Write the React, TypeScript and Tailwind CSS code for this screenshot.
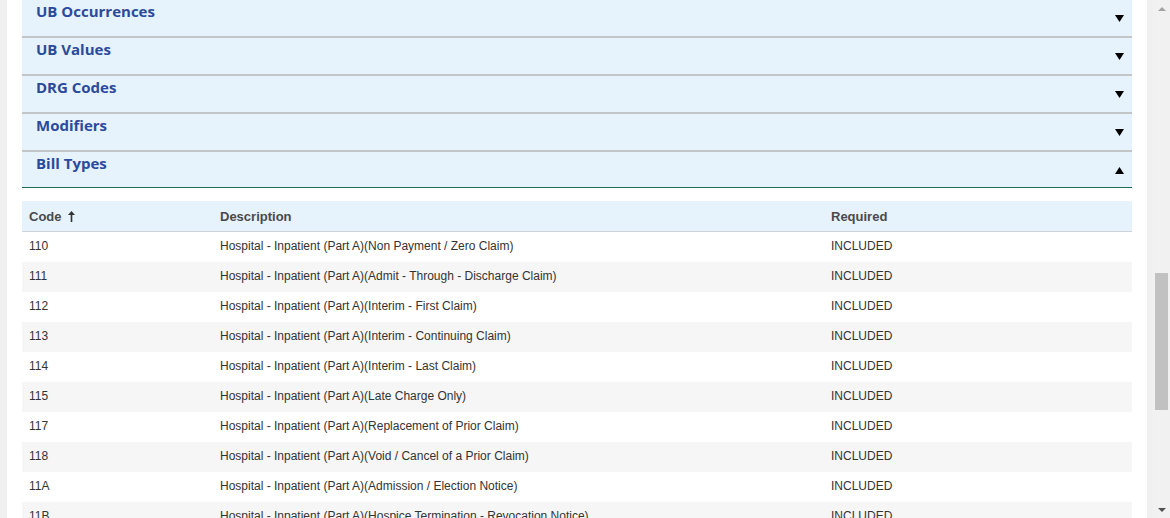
import React from 'react';

const sections = ['UB Occurrences', 'UB Values', 'DRG Codes', 'Modifiers'];

const rows: [string, string][] = [
  ['110', 'Hospital - Inpatient (Part A)(Non Payment / Zero Claim)'],
  ['111', 'Hospital - Inpatient (Part A)(Admit - Through - Discharge Claim)'],
  ['112', 'Hospital - Inpatient (Part A)(Interim - First Claim)'],
  ['113', 'Hospital - Inpatient (Part A)(Interim - Continuing Claim)'],
  ['114', 'Hospital - Inpatient (Part A)(Interim - Last Claim)'],
  ['115', 'Hospital - Inpatient (Part A)(Late Charge Only)'],
  ['117', 'Hospital - Inpatient (Part A)(Replacement of Prior Claim)'],
  ['118', 'Hospital - Inpatient (Part A)(Void / Cancel of a Prior Claim)'],
  ['11A', 'Hospital - Inpatient (Part A)(Admission / Election Notice)'],
  ['11B', 'Hospital - Inpatient (Part A)(Hospice Termination - Revocation Notice)'],
];

function Caret({ up }: { up?: boolean }) {
  return (
    <svg width="9" height="7" viewBox="0 0 9 7" className="mr-[8px]">
      {up ? <polygon points="0,7 9,7 4.5,0" fill="#000" /> : <polygon points="0,0 9,0 4.5,7" fill="#000" />}
    </svg>
  );
}

function Header({ title, open }: { title: string; open?: boolean }) {
  return (
    <div
      className={`flex items-start justify-between bg-[#e6f2fc] pl-[14px] ${
        open ? 'h-[36px] border-b border-[#1f6b5a]' : 'h-[38px] border-b-2 border-[#c3c6c9]'
      }`}
    >
      <span className="pt-[1px] text-[15px] leading-[20px] font-bold text-[#2b4a9b]" style={{ fontFamily: '"Open Sans", sans-serif' }}>
        {title}
      </span>
      <div className="flex h-[35px] items-center pt-[1px]">
        <Caret up={open} />
      </div>
    </div>
  );
}

export default function App() {
  return (
    <div className="flex h-[518px] w-[1170px] overflow-hidden bg-white" style={{ fontFamily: '"Liberation Sans", Arial, sans-serif' }}>
      <div className="w-[7px] bg-[#f0f0f0]" />
      <div className="flex-1 bg-white px-[15px]">
        {sections.map((s) => (
          <Header key={s} title={s} />
        ))}
        <Header title="Bill Types" open />
        <div className="mt-[13px]">
          <div className="flex h-[31px] items-center border-b border-[#cdd3d8] bg-[#e6f2fc] pt-[2px] text-[13px] font-bold text-[#4a4a4a]">
            <div className="flex w-[198px] items-center pl-[7px]">
              Code
              <svg width="7" height="11" viewBox="0 0 7 11" className="ml-[6px] mb-[2px]">
                <polygon points="3.5,0 7,4 0,4" fill="#333" />
                <rect x="2.7" y="3" width="1.6" height="8" fill="#333" />
              </svg>
            </div>
            <div className="w-[611px]">Description</div>
            <div>Required</div>
          </div>
          {rows.map(([code, desc], i) => (
            <div
              key={code}
              className={`flex h-[30px] items-start pt-[7px] text-[12px] leading-[14px] text-[#333] ${i % 2 === 1 ? 'bg-[#f6f6f6]' : 'bg-white'}`}
            >
              <div className="w-[198px] pl-[7px]">{code}</div>
              <div className="w-[611px]">{desc}</div>
              <div>INCLUDED</div>
            </div>
          ))}
        </div>
      </div>
      <div className="w-[6px] bg-[#f0f0f0]" />
      <div className="flex w-[17px] flex-col items-center bg-[#f1f1f1]">
        <div className="flex h-[17px] items-center">
          <svg width="8" height="4" viewBox="0 0 8 4">
            <polygon points="0,4 8,4 4,0" fill="#a3a3a3" />
          </svg>
        </div>
        <div className="mt-[256px] h-[137px] w-[13px] bg-[#c1c1c1]" />
        <div className="flex-1" />
        <div className="flex h-[17px] items-center">
          <svg width="8" height="4" viewBox="0 0 8 4">
            <polygon points="0,0 8,0 4,4" fill="#505050" />
          </svg>
        </div>
      </div>
    </div>
  );
}
